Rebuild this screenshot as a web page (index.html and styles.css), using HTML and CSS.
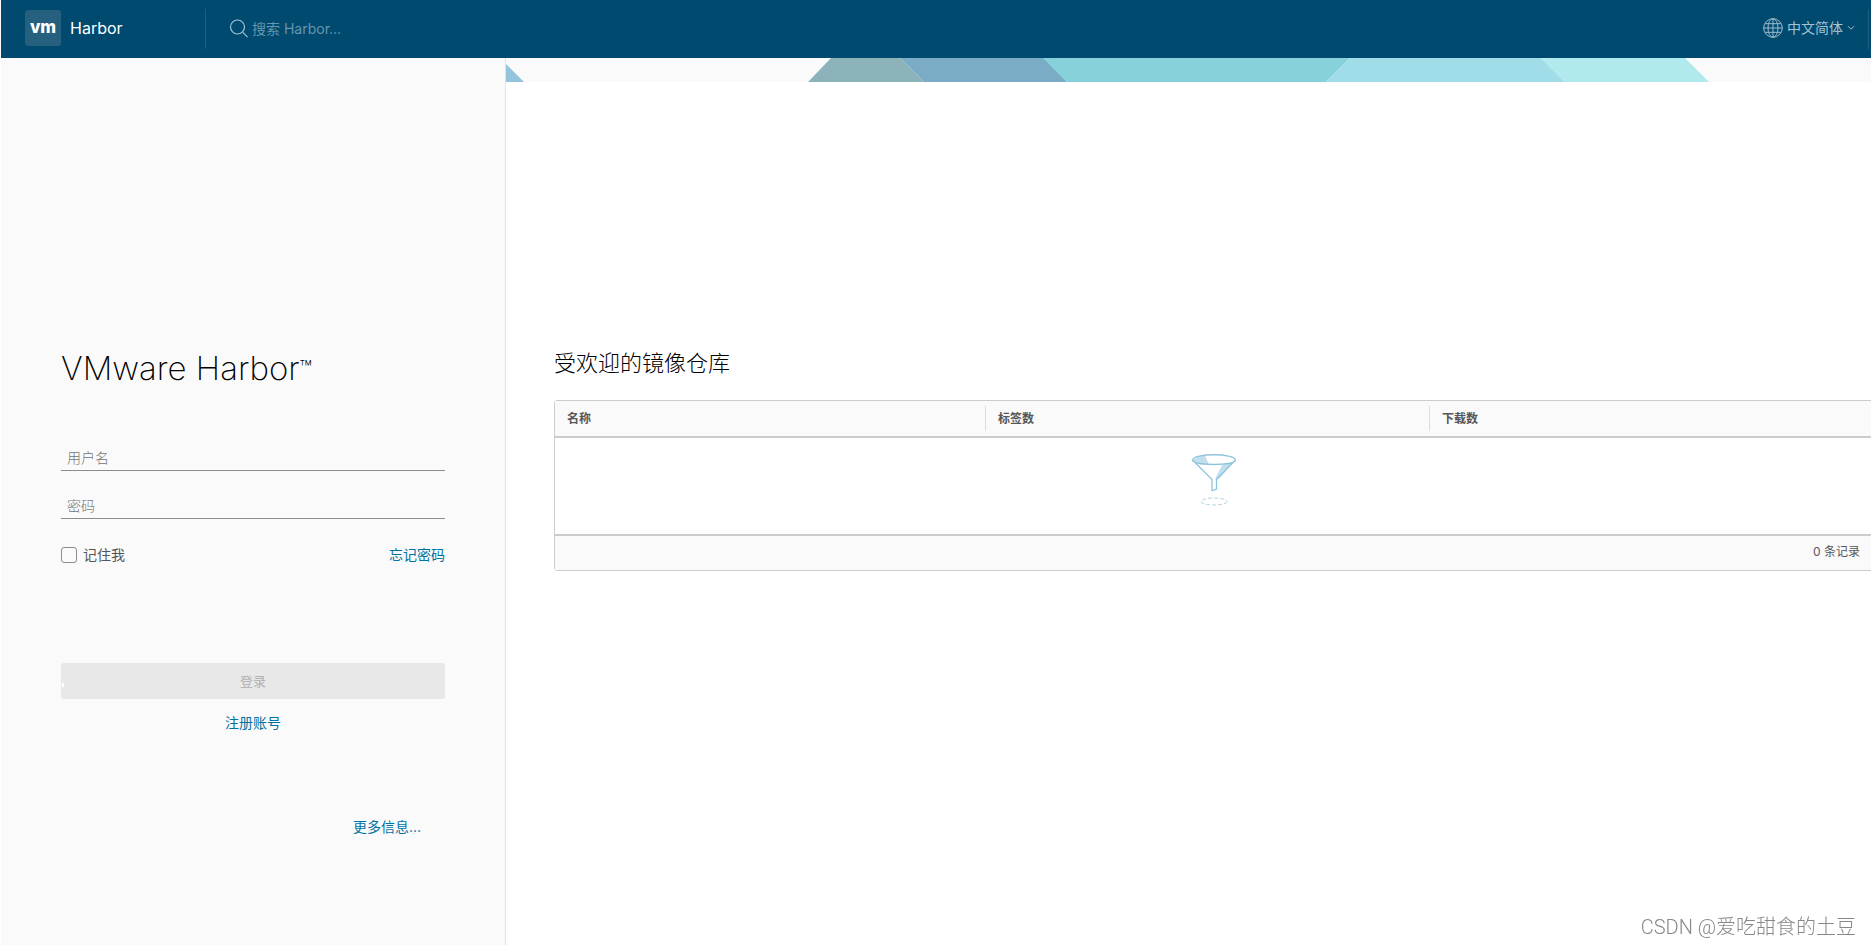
FILE: index.html
```html
<!DOCTYPE html>
<html lang="zh-CN">
<head>
<meta charset="utf-8">
<title>Harbor</title>
<link rel="stylesheet" href="styles.css">
</head>
<body>
<header class="header">
  <a class="brand" href="#"><span class="brand-logo">vm</span><span class="brand-name">Harbor</span></a>
  <label class="search">
    <svg class="search-icon" viewBox="0 0 20 20" aria-hidden="true"><circle cx="8.5" cy="8" r="7" /><path d="M13.8 13.3L18.6 18.100" /></svg>
    <input class="search-input" type="text" placeholder="搜索 Harbor..." aria-label="搜索 Harbor">
  </label>
  <button class="language" type="button">
    <svg class="globe-icon" viewBox="0 0 20 20" aria-hidden="true"><circle cx="10" cy="10" r="9.3" /><ellipse cx="10" cy="10" rx="5" ry="9.3" /><path d="M10 .7v18.6M.7 10h18.6M2 5.7h16M2 14.3h16" /></svg>
    <span>中文简体</span>
    <svg class="caret-icon" viewBox="0 0 8 6" aria-hidden="true"><path d="M1 1.2L4 4.2L7 1.2" /></svg>
  </button>
</header>
<div class="content">
  <section class="login">
    <form class="login-form">
      <h1 class="title">VMware Harbor<span class="trademark">™</span></h1>
      <input class="field" type="text" placeholder="用户名" aria-label="用户名">
      <input class="field" type="password" placeholder="密码" aria-label="密码">
      <div class="options">
        <label class="remember"><input class="checkbox" type="checkbox">记住我</label>
        <a class="link" href="#">忘记密码</a>
      </div>
      <button class="submit" type="submit" disabled>登录</button>
      <a class="link register" href="#">注册账号</a>
      <a class="link more" href="#">更多信息...</a>
    </form>
  </section>
  <main class="main">
    <div class="banner">
      <svg class="banner-art" viewBox="0 0 1365 24" aria-hidden="true">
        <path fill="#93c4dc" d="M0 6L18 24H0z" />
        <path fill="#8db3ba" d="M325 0H394L418 24H302z" />
        <path fill="#7aadc5" d="M394 0H538L561 24H418z" />
        <path fill="#87d1da" d="M537 0H844L820 24H561z" />
        <path fill="#a0dde9" d="M844 0H1035L1059 24H820z" />
        <path fill="#b1eaec" d="M1035 0H1179L1203 24H1059z" />
      </svg>
    </div>
    <section class="repositories">
      <h2 class="heading">受欢迎的镜像仓库</h2>
      <table class="grid">
        <colgroup><col class="col-name"><col><col></colgroup>
        <thead>
          <tr><th><span class="th-text">名称</span></th><th><span class="th-text th-line">标签数</span></th><th><span class="th-text th-line">下载数</span></th></tr>
        </thead>
        <tbody>
          <tr><td class="empty" colspan="3">
            <svg class="funnel" viewBox="0 0 60 60" aria-hidden="true">
              <path class="funnel-fill" d="M9 8Q14 4 21 3L25 13Q13 12 9 8z" />
              <path class="funnel-fill" d="M38 13Q47 12 51 8L35 27H31z" />
              <path class="funnel-line" d="M8.500 8C9 14 51 14 51.500 8C51 1 9 1 8.500 8L28 27.500V38.500L32.500 37V27.500L51.500 8" />
              <ellipse class="funnel-shadow" cx="30" cy="49.500" rx="13" ry="3.500" />
            </svg>
          </td></tr>
        </tbody>
        <tfoot><tr><td class="summary" colspan="3">0 条记录</td></tr></tfoot>
      </table>
    </section>
  </main>
</div>
<div class="watermark">CSDN @爱吃甜食的土豆</div>
</body>
</html>
```
FILE: styles.css
```css
* {
  box-sizing: border-box;
}

body {
  display: flex;
  flex-direction: column;
  min-height: 100vh;
  margin: 0;
  padding-left: 1px;
  overflow: hidden;
  background: #fff;
  color: #565656;
  font-family: Inter, "Noto Sans CJK SC", sans-serif;
  font-size: 14px;
  line-height: 24px;
}

input,
button {
  font: inherit;
}

a {
  text-decoration: none;
}

.header {
  display: flex;
  align-items: center;
  height: 58px;
  padding-right: 2px;
  background: #004a70;
}

.brand {
  display: flex;
  align-items: center;
  gap: 9px;
  width: 205px;
  height: 40px;
  padding: 0 0 2px 24px;
  border-right: 1px solid #1f6082;
  color: #fff;
  font-size: 16px;
}

.brand-logo {
  width: 36px;
  height: 36px;
  border-radius: 3px;
  background: #25617f;
  font-size: 17px;
  font-weight: 800;
  line-height: 34px;
  text-align: center;
}

.search {
  display: flex;
  flex: 1;
  align-items: center;
  gap: 3px;
  padding-left: 23px;
}

.search-icon {
  width: 20px;
  height: 20px;
  fill: none;
  stroke: #9bc4d8;
  stroke-width: 1.2;
}

.search-input {
  width: 240px;
  padding: 0;
  border: 0;
  outline: 0;
  background: none;
  color: #fff;
}

.search-input::placeholder {
  color: #6695ad;
  opacity: 1;
}

.language {
  display: flex;
  align-items: center;
  gap: 4px;
  height: 40px;
  padding: 0 13px 2px 0;
  border: 0;
  border-right: 1px solid #1f6082;
  background: none;
  color: #a5c3d2;
}

.globe-icon {
  width: 20px;
  height: 20px;
  fill: none;
  stroke: #9bbccc;
}

.caret-icon {
  width: 8px;
  height: 6px;
  fill: none;
  stroke: #a5c3d2;
}

.content {
  display: flex;
  flex: 1;
}

.login {
  width: 505px;
  padding: 286px 60px 0;
  border-right: 1px solid #e4e4e4;
  background: #fafafa;
}

.login-form {
  display: flex;
  flex-direction: column;
}

.title {
  margin: 0 0 55px;
  color: #000;
  font-size: 33px;
  font-weight: 200;
  line-height: 48px;
}

.trademark {
  font-size: 21px;
  vertical-align: 4px;
  line-height: 16px;
}

.field {
  width: 100%;
  height: 24px;
  margin-bottom: 24px;
  padding: 0 6px 1px;
  border: 0;
  border-bottom: 1px solid #8c8c8c;
  border-radius: 0;
  outline: 0;
  background: none;
  font-weight: 300;
}

.field::placeholder {
  color: #757575;
  opacity: 1;
}

.options {
  display: flex;
  align-items: center;
  justify-content: space-between;
  margin-bottom: 96px;
}

.remember {
  display: flex;
  align-items: center;
  gap: 6px;
}

.checkbox {
  width: 16px;
  height: 16px;
  margin: 0;
  border: 1px solid #8c8c8c;
  border-radius: 3px;
  appearance: none;
}

.link {
  color: #0072a3;
}

.submit {
  position: relative;
  height: 36px;
  padding: 0;
  border: 0;
  border-radius: 3px;
  background: #e8e8e8;
  color: #b0b0b0;
  font-size: 13px;
}

.submit::before {
  position: absolute;
  top: 20px;
  left: 1px;
  width: 2px;
  height: 4px;
  background: #fff;
  content: "";
}

.register {
  align-self: center;
  margin: 12px 0 80px;
}

.more {
  align-self: flex-end;
  margin-right: 24px;
}

.main {
  flex: 1;
  min-width: 0;
  overflow: hidden;
}

.banner {
  height: 24px;
  overflow: hidden;
  background: #fafafa;
}

.banner-art {
  display: block;
  width: 1365px;
  height: 24px;
}

.repositories {
  margin-right: -3px;
  padding: 263px 0 0 48px;
}

.heading {
  margin: 0 0 19px;
  color: #000;
  font-size: 22px;
  font-weight: 300;
  line-height: 36px;
}

.grid {
  width: 100%;
  border: 1px solid #ccc;
  border-radius: 3px;
  border-spacing: 0;
  table-layout: fixed;
  font-size: 12px;
}

.col-name {
  width: 430px;
}

.grid th {
  padding: 5px 0;
  border-bottom: 2px solid #ccc;
  background: #fafafa;
  text-align: left;
}

.th-text {
  display: block;
  padding-left: 12px;
  font-weight: 600;
  line-height: 25px;
}

.th-line {
  border-left: 1px solid #ddd;
}

.empty {
  height: 96px;
  padding: 0;
  vertical-align: top;
}

.funnel {
  display: block;
  width: 60px;
  height: 60px;
  margin: 14px auto 0;
  fill: none;
}

.funnel-fill {
  fill: #c1dfef;
}

.funnel-line {
  stroke: #8fc3db;
  stroke-width: 1.3;
}

.funnel-shadow {
  stroke: #b5d3e0;
  stroke-dasharray: 4 2;
}

.summary {
  height: 36px;
  padding: 0 13px 2px;
  border-top: 2px solid #ccc;
  background: #fafafa;
  text-align: right;
}

.watermark {
  position: fixed;
  right: 15px;
  bottom: 4px;
  color: #888;
  font-family: Roboto, "Noto Sans CJK SC", sans-serif;
  font-size: 20px;
  font-weight: 300;
  line-height: 28px;
}
```
